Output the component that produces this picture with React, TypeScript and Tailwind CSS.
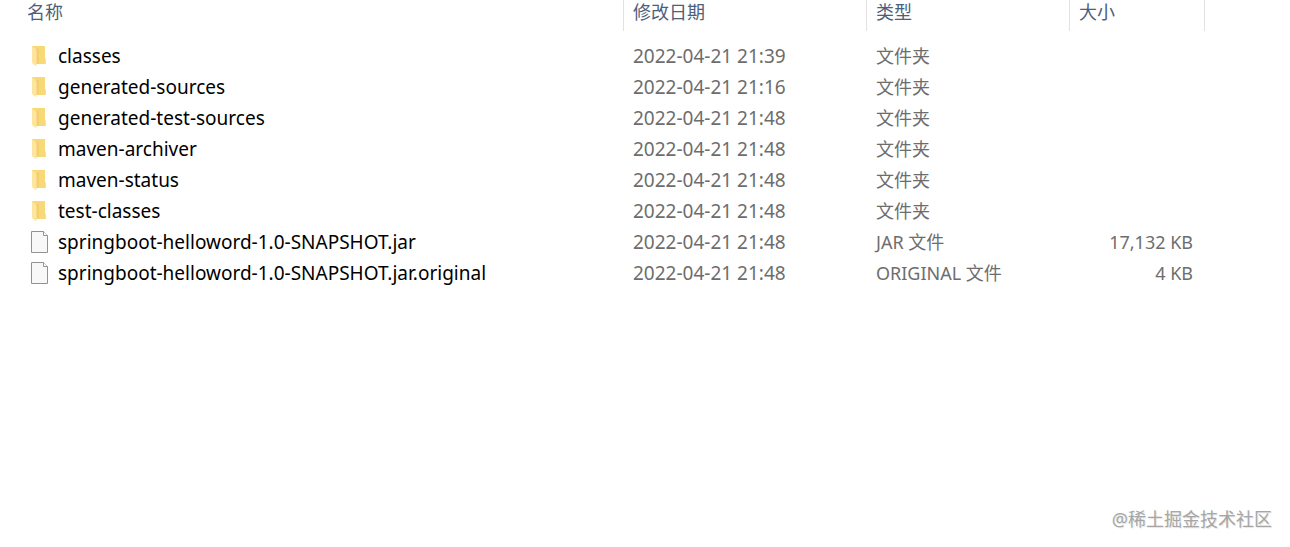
import React from 'react';

type Entry = {
  name: string;
  modified: string;
  type: string;
  size?: string;
  folder?: boolean;
};

const entries: Entry[] = [
  { name: 'classes', modified: '2022-04-21 21:39', type: '文件夹', folder: true },
  { name: 'generated-sources', modified: '2022-04-21 21:16', type: '文件夹', folder: true },
  { name: 'generated-test-sources', modified: '2022-04-21 21:48', type: '文件夹', folder: true },
  { name: 'maven-archiver', modified: '2022-04-21 21:48', type: '文件夹', folder: true },
  { name: 'maven-status', modified: '2022-04-21 21:48', type: '文件夹', folder: true },
  { name: 'test-classes', modified: '2022-04-21 21:48', type: '文件夹', folder: true },
  { name: 'springboot-helloword-1.0-SNAPSHOT.jar', modified: '2022-04-21 21:48', type: 'JAR 文件', size: '17,132 KB' },
  { name: 'springboot-helloword-1.0-SNAPSHOT.jar.original', modified: '2022-04-21 21:48', type: 'ORIGINAL 文件', size: '4 KB' },
];

const columns = [
  { label: '名称', className: 'pl-[27px]' },
  { label: '修改日期', className: 'w-[243px] pl-[9px]' },
  { label: '类型', className: 'w-[203px] pl-[9px]' },
  { label: '大小', className: 'w-[135px] pl-[9px]' },
];

const FolderIcon: React.FC = () => (
  <svg width="18" height="22" viewBox="0 0 18 22" className="shrink-0" aria-hidden="true">
    <path d="M1 1H14V13L14.8 14V19H4Z" fill="#f8d978" />
    <path d="M5 4.5L8 3V19H5Z" fill="#f3cf70" />
    <path d="M1 1.5L4 3.5L5.5 6V21L4 20.5L1 18Z" fill="#fde5a0" />
  </svg>
);

const FileIcon: React.FC = () => (
  <svg width="18" height="22" viewBox="0 0 18 22" className="shrink-0" aria-hidden="true">
    <path d="M0.5 0.5H12.5L16.5 4.5V21.5H0.5Z" fill="#f8f8f8" stroke="#929292" />
    <path d="M12.5 0.5V4.5H16.5" fill="#fff" stroke="#929292" />
  </svg>
);

export default function App() {
  return (
    <div className="flex min-h-screen flex-col justify-between bg-white font-['Noto_Sans','Noto_Sans_CJK_SC',sans-serif] text-lg leading-6 text-[#6d6d6d]">
      <table className="w-full table-fixed border-separate border-spacing-0">
        <thead>
          <tr>
            {columns.map((col) => (
              <th
                key={col.label}
                className={`h-[31px] border-r border-[#e2e2e2] p-0 text-left align-top font-normal text-[#4c607a] ${col.className}`}
              >
                <button type="button" className="block">{col.label}</button>
              </th>
            ))}
            <td className="w-[85px]" />
          </tr>
        </thead>
        <tbody className="before:block before:h-[9px]">
          {entries.map((entry) => (
            <tr key={entry.name} className="h-[31px]">
              <td className="p-0 pl-[31px] text-[19px] leading-6 text-black">
                <div className="flex items-center gap-[9px] whitespace-nowrap">
                  {entry.folder ? <FolderIcon /> : <FileIcon />}
                  <span>{entry.name}</span>
                </div>
              </td>
              <td className="p-0 pl-[9px] text-[19px] leading-6 whitespace-nowrap">{entry.modified}</td>
              <td className="p-0 pl-[9px] whitespace-nowrap">{entry.type}</td>
              <td className="p-0 pr-3 text-right whitespace-nowrap">{entry.size}</td>
              <td />
            </tr>
          ))}
        </tbody>
      </table>

      {/* Watermark */}
      <div className="pr-[18px] pb-4 text-right text-[#a6a6a6] [text-shadow:1px_1px_1px_#e4e4e4]">@稀土掘金技术社区</div>
    </div>
  );
}
